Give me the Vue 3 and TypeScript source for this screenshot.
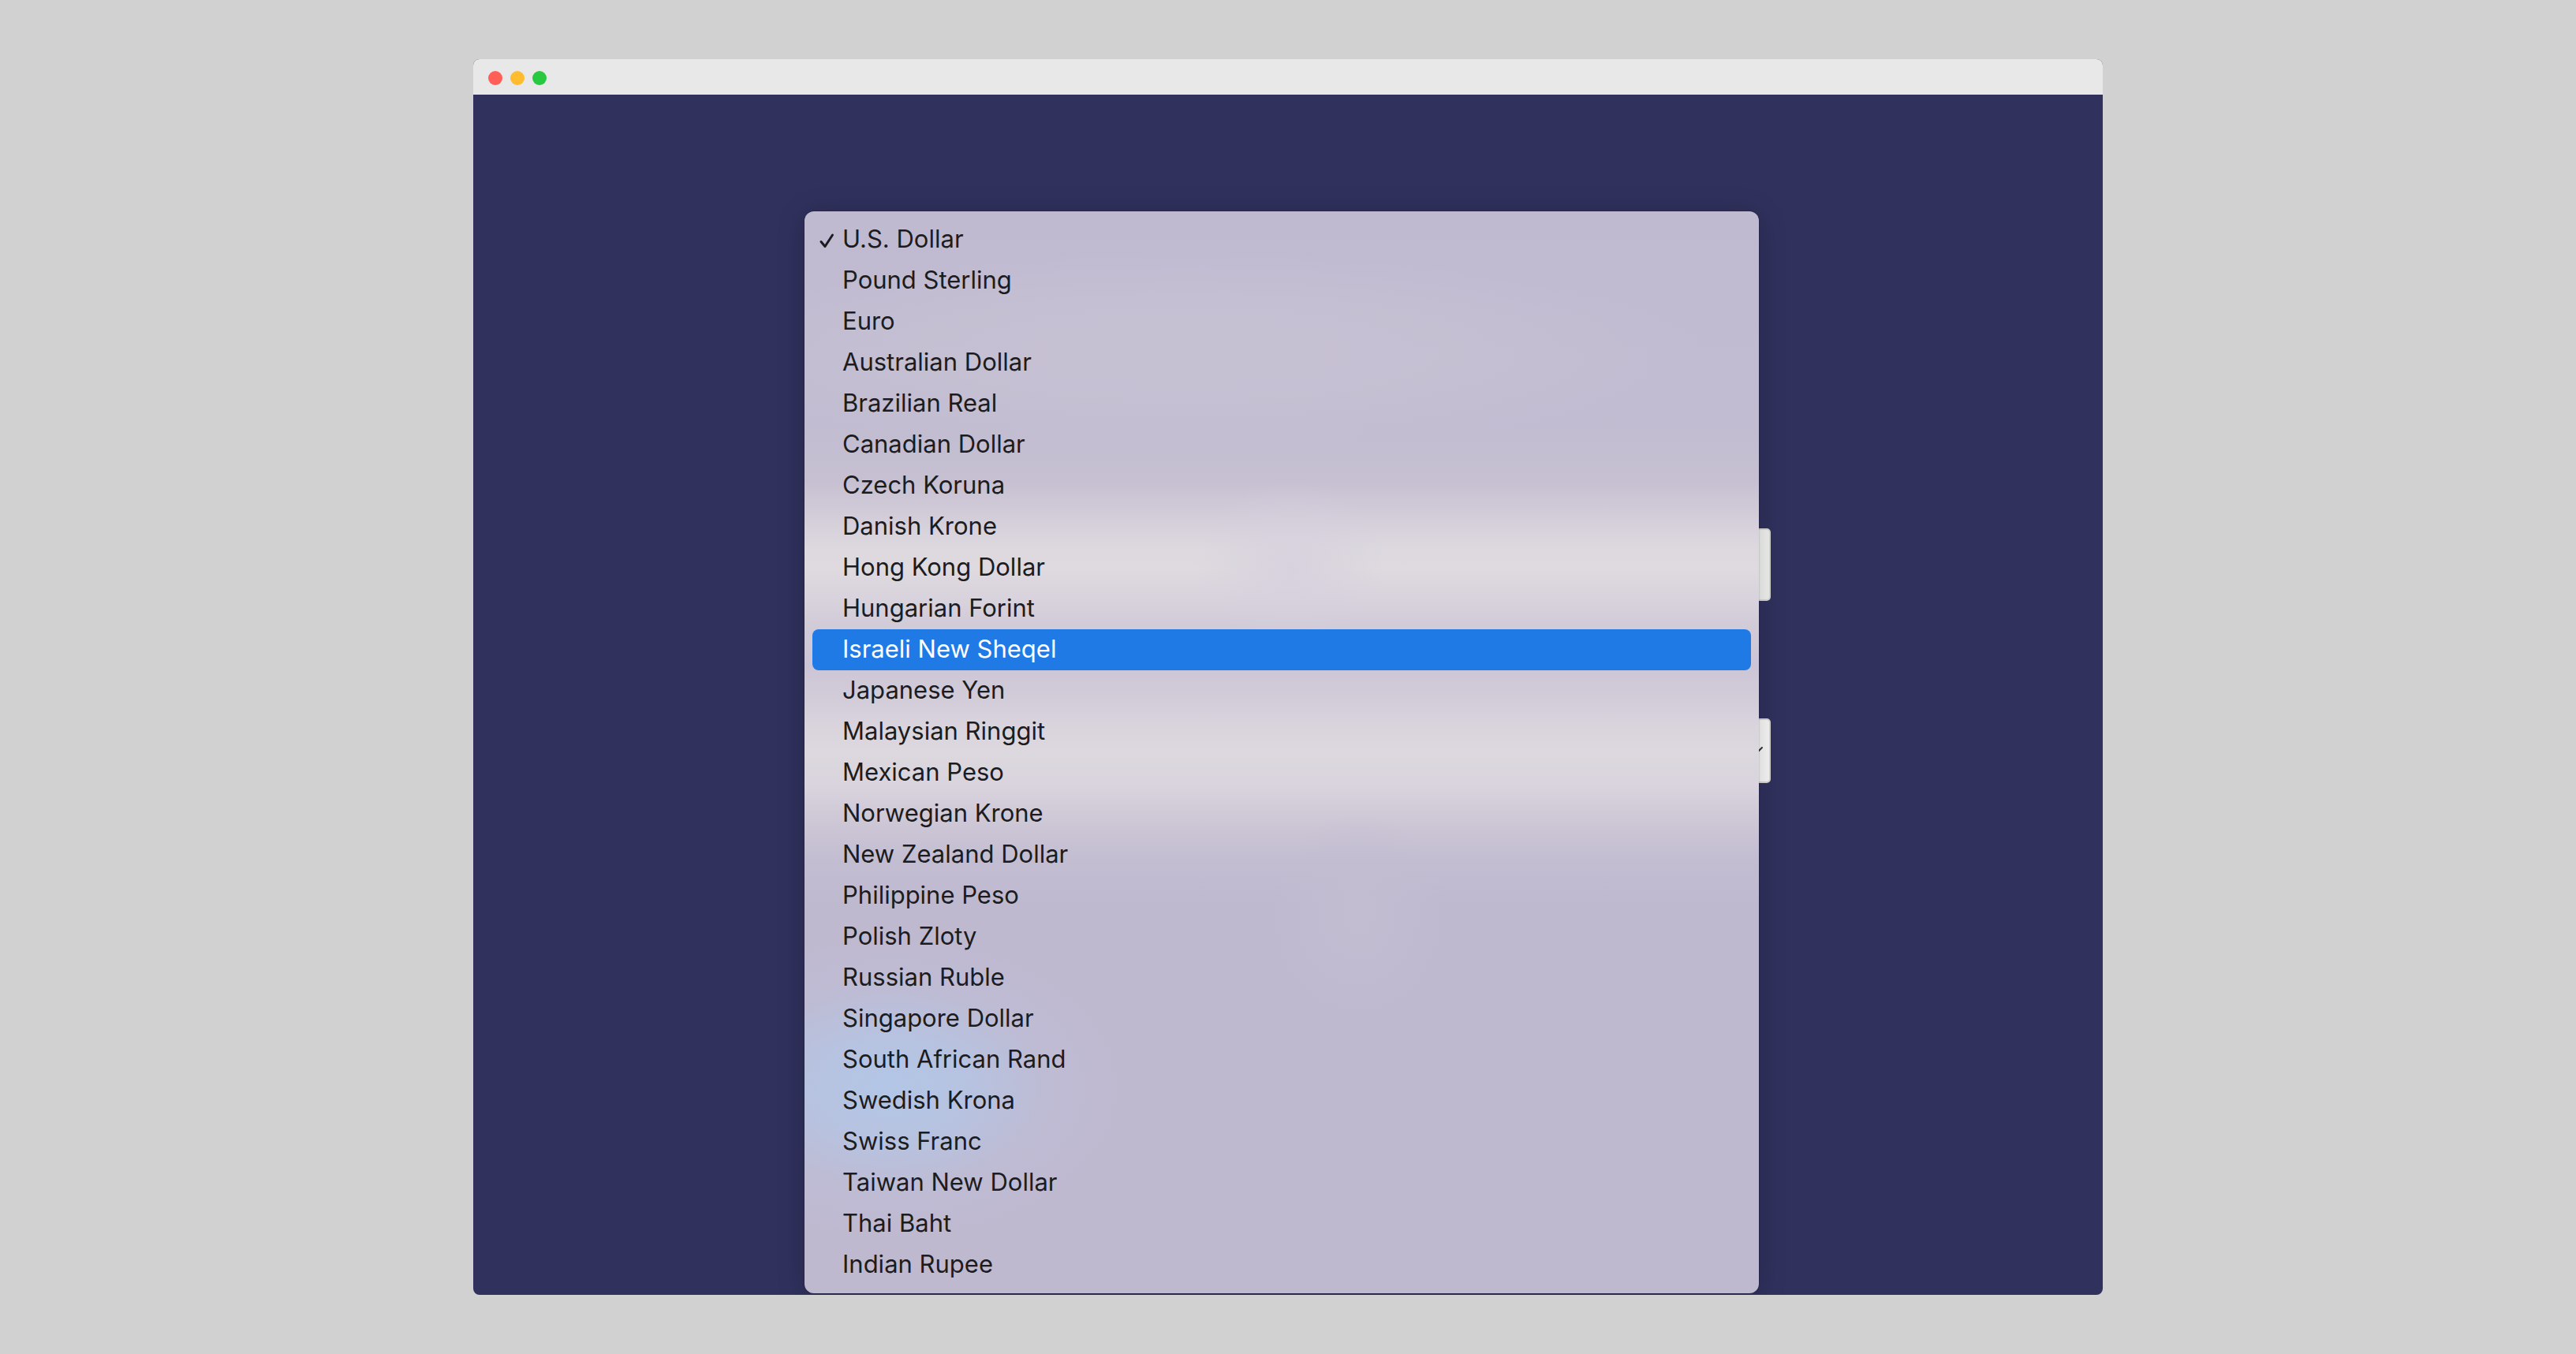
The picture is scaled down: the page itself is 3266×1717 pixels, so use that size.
<script setup lang="ts">
import { ref } from 'vue'

const currencies: string[] = [
  'U.S. Dollar',
  'Pound Sterling',
  'Euro',
  'Australian Dollar',
  'Brazilian Real',
  'Canadian Dollar',
  'Czech Koruna',
  'Danish Krone',
  'Hong Kong Dollar',
  'Hungarian Forint',
  'Israeli New Sheqel',
  'Japanese Yen',
  'Malaysian Ringgit',
  'Mexican Peso',
  'Norwegian Krone',
  'New Zealand Dollar',
  'Philippine Peso',
  'Polish Zloty',
  'Russian Ruble',
  'Singapore Dollar',
  'South African Rand',
  'Swedish Krona',
  'Swiss Franc',
  'Taiwan New Dollar',
  'Thai Baht',
  'Indian Rupee',
]

const selected = ref('U.S. Dollar')
const active = ref('Israeli New Sheqel')
const minimum = ref('')
const maximum = ref('')
</script>

<template>
  <main class="page">
    <section class="window">
      <header class="titlebar">
        <button class="light close" type="button" aria-label="Close"></button>
        <button class="light minimize" type="button" aria-label="Minimize"></button>
        <button class="light zoom" type="button" aria-label="Zoom"></button>
      </header>
      <div class="stage">
        <form class="fields">
          <div class="amounts">
            <input v-model="minimum" class="field amount" type="text" aria-label="Minimum amount" />
            <input v-model="maximum" class="field amount" type="text" aria-label="Maximum amount" />
          </div>
          <div class="picker">
            <select v-model="selected" class="field currency" aria-label="Currency">
              <option v-for="name in currencies" :key="name" :value="name">{{ name }}</option>
            </select>
            <svg class="chevron" viewBox="0 0 20 12" aria-hidden="true">
              <path d="M2 2l8 8 8-8" />
            </svg>
          </div>
        </form>
        <div class="menu" role="listbox" aria-label="Currency">
          <button
            v-for="name in currencies"
            :key="name"
            type="button"
            role="option"
            class="item"
            :class="{ active: name === active }"
            :aria-selected="name === selected"
            @mouseenter="active = name"
            @click="selected = name"
          >
            <span class="mark">
              <svg v-if="name === selected" viewBox="0 0 20 20" aria-hidden="true">
                <path d="M3 13.500l5 6L17.500 5" />
              </svg>
            </span>
            <span>{{ name }}</span>
          </button>
        </div>
      </div>
    </section>
  </main>
</template>

<style>
body {
  background: #d1d1d1;
}
</style>

<style scoped>
.page {
  box-sizing: border-box;
  min-height: 100vh;
  padding: 75px 600px;
  background: #d1d1d1;
  font-family: Inter, "Liberation Sans", sans-serif;
}

.window {
  border-radius: 8px;
  overflow: hidden;
  background: #30315d;
}

.titlebar {
  box-sizing: border-box;
  display: flex;
  gap: 10px;
  height: 45px;
  padding: 15px 19px;
  background: #e8e8e8;
}

.light {
  width: 18px;
  height: 18px;
  padding: 0;
  border: 0;
  border-radius: 50%;
}

.close {
  background: #ff5f57;
}

.minimize {
  background: #febc2e;
}

.zoom {
  background: #28c840;
}

/* The form and the open menu share one grid cell, so the menu covers the fields. */
.stage {
  display: grid;
  grid-template-columns: minmax(0, 1fr);
  padding: 148px 421px 2px 420px;
}

.fields,
.menu {
  grid-area: 1 / 1;
}

.fields {
  padding-top: 402px;
}

.amounts {
  display: flex;
  gap: 60px;
  margin-bottom: 149px;
}

.field {
  box-sizing: border-box;
  width: 100%;
  border: 2px solid #d8d8d4;
  border-radius: 5px;
  background: #f8f8f8;
  font: inherit;
}

.amount {
  flex: 1;
  min-width: 0;
  height: 92px;
  background: #f0f2f0;
}

.picker {
  display: grid;
  align-items: center;
}

.picker > * {
  grid-area: 1 / 1;
}

.currency {
  height: 82px;
  appearance: none;
}

.chevron {
  width: 20px;
  height: 12px;
  margin-right: 9px;
  justify-self: end;
  pointer-events: none;
}

.chevron path {
  fill: none;
  stroke: #333333;
  stroke-width: 2;
  stroke-linecap: round;
}

.menu {
  z-index: 1;
  margin-right: 15px;
  padding: 10px;
  border-radius: 12px;
  background:
    radial-gradient(ellipse 290px 190px at 9% 81%, #b3c6e6 0%, #b4c5e4cc 35%, #bcc0dc66 65%, #bfb9d000 100%),
    radial-gradient(ellipse 110px 130px at 58% 65%, #c2bdd0 0%, #c2bdd000 100%),
    radial-gradient(ellipse 120px 110px at 51% 33%, #d5d0ddcc 0%, #d5d0dd00 100%),
    radial-gradient(ellipse 660px 130px at 40% 13%, #c6c1d2 0%, #c5c0d2cc 50%, #c0bad100 100%),
    linear-gradient(
      180deg,
      #c0bad1 0%,
      #c1bbd1 10%,
      #c2bcd1 20%,
      #c6c0d2 25%,
      #d6d0db 29%,
      #dcd8de 31%,
      #dedadf 33%,
      #dad5dd 35%,
      #d2ccd9 38%,
      #ccc5d6 42%,
      #d2ccd9 45%,
      #dad5dd 48%,
      #dcd8de 50%,
      #d9d4dd 53%,
      #cbc5d5 57%,
      #c3bdd2 60%,
      #bfb9d0 64%,
      #bfb9d0 100%
    );
  box-shadow:
    0 0 2px rgba(0, 0, 0, 0.3),
    0 4px 36px rgba(0, 0, 0, 0.2);
}

.item {
  display: flex;
  align-items: center;
  width: 100%;
  height: 52px;
  padding: 0 8px 2px;
  border: 0;
  border-radius: 8px;
  background: transparent;
  color: #1c1c1e;
  font: inherit;
  font-size: 31px;
  line-height: 40px;
  text-align: left;
  white-space: nowrap;
}

.item.active {
  background: #1f7ae6;
  color: #ffffff;
}

.mark {
  display: flex;
  width: 30px;
}

.mark svg {
  width: 20px;
  height: 20px;
  overflow: visible;
}

.mark path {
  fill: none;
  stroke: #1c1c1e;
  stroke-width: 3;
  stroke-linecap: round;
  stroke-linejoin: round;
}
</style>
